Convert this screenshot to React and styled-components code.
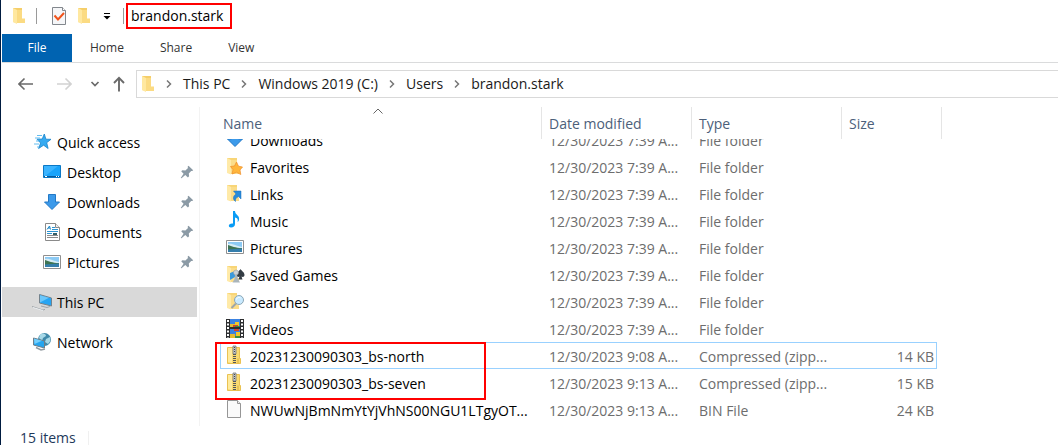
import React from "react";
import styled, { createGlobalStyle, css } from "styled-components";

const GlobalStyle = createGlobalStyle`
  *, *::before, *::after { box-sizing: border-box; }
  body {
    margin: 0;
    background: #fff;
    color: #000;
    font: 14px/20px "Open Sans", "Noto Sans", sans-serif;
  }
  button { font: inherit; color: inherit; border: 0; padding: 0; background: none; }
  a { color: inherit; text-decoration: none; }
  ul, ol { list-style: none; margin: 0; padding: 0; }
  svg { display: block; flex: none; }
`;

/* ---------- window frame ---------- */

const Window = styled.div`
  min-height: 100vh;
  display: flex;
  flex-direction: column;
  padding-left: 1px;
  border-left: 1px solid #001b40;
  overflow: hidden;
`;

const TitleBar = styled.header`
  display: flex;
  align-items: center;
  height: 34px;
  padding: 0 0 2px 10px;
`;

const ToolButton = styled.button`
  display: grid;
  place-items: center;
  width: ${(p) => p.$width}px;
  height: 24px;
`;

const Separator = styled.span`
  width: 1px;
  height: 16px;
  margin: 0 ${(p) => p.$after}px 0 ${(p) => p.$before}px;
  background: #9a9a9a;
`;

const WindowTitle = styled.h1`
  margin: 0;
  padding: 0 7px 0 3px;
  border: 2px solid #f00;
  height: 26px;
  font-size: 14px;
  font-weight: 400;
  line-height: 22px;
`;

const Ribbon = styled.nav`
  display: flex;
  height: 29px;
  border-bottom: 1px solid #dadbdc;
  font-size: 12px;
`;

const RibbonTab = styled.button`
  height: 28px;
  padding: 0 18px;
  color: #333;
  ${(p) =>
    p.$primary &&
    css`
      width: 70px;
      background: #0063b1;
      color: #fff;
    `}
`;

const NavBar = styled.div`
  display: flex;
  align-items: center;
  padding: 7px 0 9px 10px;
`;

const NavButton = styled(ToolButton)`
  color: ${(p) => (p.disabled ? "#d2d2d2" : "#6a6a6a")};
`;

const AddressBar = styled.ol`
  flex: 1;
  display: flex;
  align-items: center;
  height: 28px;
  padding-left: 4px;
  border: 1px solid #d9d9d9;
  border-right: 0;
`;

const Crumb = styled.li`
  display: flex;
  align-items: center;
  color: #1a1a1a;
  svg { margin: 0 10px; }
`;

/* ---------- main area ---------- */

const Content = styled.div`
  flex: 1;
  display: flex;
`;

const Sidebar = styled.nav`
  flex: none;
  width: 198px;
  padding: 20px 2px 0 0;
  border-right: 1px solid #f3f3f3;
`;

const SideGroup = styled.ul`
  margin-bottom: 10px;
`;

const SideLink = styled.a`
  display: flex;
  align-items: center;
  gap: 5px;
  height: 30px;
  padding: 0 3px 0 ${(p) => (p.$nested ? 40 : 30)}px;
  background: ${(p) => (p.$current ? "#d9d9d9" : "transparent")};
  span { flex: 1; line-height: 20px; padding-top: 2px; }
`;

const FilePane = styled.main`
  flex: 1;
  min-width: 0;
  overflow: hidden;
`;

const FileTable = styled.table`
  display: block;
`;

const TableHead = styled.thead`
  display: block;
  padding-left: 20px;
`;

const HeadRow = styled.tr`
  display: grid;
  grid-template-columns: 322px 150px 150px 100px;
  height: 32px;
`;

const HeadCell = styled.th`
  position: relative;
  padding: 7px 0 0 ${(p) => (p.$first ? 3 : 7)}px;
  border-right: 1px solid #e5e5e5;
  color: #4c607a;
  font-weight: 400;
  text-align: left;
`;

const SortMark = styled.svg`
  position: absolute;
  top: 1px;
  left: 50%;
  margin-left: -8px;
`;

/* The list is scrolled part of a row below the column headings. */
const TableBody = styled.tbody`
  display: block;
  overflow: hidden;
  padding: 0 0 3px 20px;
  tr:first-child { margin-top: -13px; }
`;

const FileRow = styled.tr`
  position: relative;
  display: grid;
  grid-template-columns: 321px 150px 150px 96px;
  width: 717px;
  height: 27px;
  line-height: 27px;
  border: 1px solid ${(p) => (p.$focused ? "#99d1ff" : "transparent")};
`;

const Cell = styled.td`
  height: 25px;
  padding: 0 4px 0 7px;
  color: #6d6d6d;
  white-space: nowrap;
  text-align: ${(p) => (p.$right ? "right" : "left")};
`;

const NameCell = styled(Cell)`
  display: grid;
  grid-template-columns: 20px 1fr;
  gap: 5px;
  padding: 0 0 0 4px;
  color: #000;
  svg { margin-top: 2px; }
`;

const Callout = styled.span`
  position: absolute;
  z-index: 1;
  top: -1px;
  left: -6px;
  width: 271px;
  height: 58px;
  border: 2px solid #f00;
  pointer-events: none;
`;

const StatusBar = styled.footer`
  display: flex;
  padding: 5px 0 0 18px;
  line-height: 14px;
  color: #1e395b;
  span {
    padding-right: 12px;
    border-right: 1px solid #f0f0f0;
  }
`;

/* ---------- icons ---------- */

const Svg = ({ w = 20, h = 20, children, ...rest }) => (
  <svg width={w} height={h} viewBox={`0 0 ${w} ${h}`} fill="none" aria-hidden="true" {...rest}>
    {children}
  </svg>
);

const FolderShape = () => (
  <>
    <path d="M2 2h10v12l2 1v3H5L2 16z" fill="#f8d577" />
    <path d="M2 2l4 2v14.500L2 17z" fill="#ffeaa8" />
    <path d="M6 4h6v9.500l2 1V18H6z" fill="#fbdd8a" />
  </>
);

const SmallFolder = () => (
  <Svg w={14} h={18}>
    <path d="M1 1h9v11h3v4H5L1 15z" fill="#f5ce69" />
    <path d="M1 1l4 2v14l-4-2z" fill="#ffe8a0" />
    <path d="M5 3h5v8.500h3V16H5z" fill="#fbdb83" />
  </Svg>
);

const CheckDoc = () => (
  <Svg w={16} h={18}>
    <path d="M1.500.5h10l3 3v14h-13z" fill="#f5f6f8" stroke="#82878d" />
    <path d="M11.500.5v3h3" stroke="#82878d" fill="#fff" />
    <path d="M3.500 8.500l3.500 4 6-6.500" stroke="#f0531c" strokeWidth="2" />
  </Svg>
);

const MenuArrow = () => (
  <Svg w={8} h={8}>
    <path d="M1 1.500h6" stroke="#000" />
    <path d="M.5 4h7L4 7.500z" fill="#000" />
  </Svg>
);

const ArrowIcon = ({ flip }) => (
  <Svg w={16} h={14}>
    <path d={flip ? "M1 7h14M9.500 1.500L15 7l-5.500 5.500" : "M15 7H1M6.500 1.500L1 7l5.500 5.500"} stroke="currentColor" strokeWidth="1.600" />
  </Svg>
);

const UpIcon = () => (
  <Svg w={12} h={16}>
    <path d="M6 15.500V2M1 7l5-5.200L11 7" stroke="currentColor" strokeWidth="1.900" />
  </Svg>
);

const DownChevron = () => (
  <Svg w={10} h={8}>
    <path d="M1.500 2L5 5.500 8.500 2" stroke="currentColor" strokeWidth="1.700" />
  </Svg>
);

const CrumbChevron = () => (
  <Svg w={8} h={10}>
    <path d="M2 1.500L5.500 5 2 8.500" stroke="#777" strokeWidth="1.500" />
  </Svg>
);

const PinIcon = () => (
  <Svg w={14} h={14}>
    <path d="M8.500.8l4.700 4.400-1 .9-1-.2-2.400 2.500.3 2.900-1.200 1.200-2.600-2.600L1.500 13.300l-.8-.2 2.900-4.400L1.200 6.300l1.200-1.100 3 .2L8 3l-.4-1.200z" fill="#8b9aa5" />
  </Svg>
);

const QuickIcon = () => (
  <Svg>
    <path d="M12.300 2l1.600 5.200 5.100.1-4.300 3.400 1.400 5.800-4.500-3.300-5 3.300 2-5.500-3.600-3.800 5.200-.2z" fill="#35aaf1" stroke="#1683ca" strokeWidth=".8" />
    <path d="M5 3.500h5M3 6h5M4 9h3M2 12h5M5 15h2" stroke="#63bdf0" />
  </Svg>
);

const DesktopIcon = () => (
  <Svg>
    <path d="M1.500 3.500h17v12h-17z" fill="#18a3fa" stroke="#0b78c5" />
    <path d="M2 15L16 4H2z" fill="#3bb4ff" />
    <path d="M2 14.500h16" stroke="#07599a" />
    <path d="M3 14.500h2M14 14.500h1M16 14.500h1" stroke="#fff" />
  </Svg>
);

const DownloadIcon = () => (
  <Svg>
    <path d="M6.500 2.500h7V10h4L10 17.500 2.500 10h4z" fill="#3c9aea" stroke="#2379c6" />
  </Svg>
);

const DocumentIcon = () => (
  <Svg>
    <path d="M3.500 1.500h10l4 4v13h-14z" fill="#fff" stroke="#8a8a8a" />
    <path d="M13.500 1.500v4h4" fill="#eee" stroke="#8a8a8a" />
    <path d="M5 7.500L7.500 4l1 3.500M6 6h2" stroke="#1b86c7" />
    <path d="M10 5.500h3M10 7.500h6M5 9.500h11M5 11.500h5" stroke="#2b93d1" />
    <path d="M5 13.500h11M5 15.500h11" stroke="#8b8b8b" />
    <path d="M11 11h4v2h-4z" fill="#315f68" />
  </Svg>
);

const PictureIcon = () => (
  <Svg>
    <path d="M1.500 3.500h17v13h-17z" fill="#fff" stroke="#8f8f8f" />
    <path d="M3 5h14v10H3z" fill="#8ccaf4" />
    <path d="M3 7c5-1 7 2 14 3v3H3z" fill="#d7edf5" />
    <path d="M3 8c4 1 7 3 14 3v2H3z" fill="#3e7453" />
    <path d="M3 12.500l14-1V15H3z" fill="#357eac" />
  </Svg>
);

const PcIcon = () => (
  <Svg>
    <path d="M7.500 2.500l12 3.500v8l-12-3z" fill="#27a5f3" stroke="#74828c" />
    <path d="M8 3.200L17 5.800 8 10.500z" fill="#6bc7fb" />
    <path d="M9 14l6 1.500 3-1M0 14.500l11 3.500 2-.6" stroke="#8f979d" strokeWidth=".8" />
    <path d="M1 15.500l10 3" stroke="#e9edf0" />
  </Svg>
);

const NetworkIcon = () => (
  <Svg>
    <circle cx="12.500" cy="7.500" r="6.500" fill="#3f89a9" />
    <path d="M8 3c3-3 6-1 6 1l-3 2-1 3-3-3zM14 7l4-2c1 3 0 5-2 7l-3-2z" fill="#a6d8e7" />
    <path d="M1.500 6l11 3v7l-11-3z" fill="#25a5ef" stroke="#6f7e88" />
    <path d="M2 6.600l8 2.200L2.500 12z" fill="#74cffc" />
    <path d="M4 15.500l5 2.500 4-1" stroke="#929ba1" strokeWidth="1.500" />
  </Svg>
);

const FavoritesIcon = () => (
  <Svg>
    <FolderShape />
    <path d="M11.500 6l2 4.200 4 .8-2.500 3 .8 4.500-4.300-2.200L7 18l1-4.300L5.500 10.500l4-.5z" fill="#ffb63b" stroke="#ee8d29" strokeWidth=".7" />
  </Svg>
);

const LinksIcon = () => (
  <Svg>
    <FolderShape />
    <path d="M8.500 8H16v8l-2.500-2.500C11 15 10 16 10.500 18.500 7 16 8.500 12.500 11 11z" fill="#278bda" stroke="#1c6eb8" strokeWidth=".5" />
  </Svg>
);

const MusicIcon = () => (
  <Svg>
    <path d="M8 1h2c0 4 5 4 4 9-.4 1-1 2-1.500 2 1-3-.5-4-2.500-4.500V14c0 2-1.500 3.500-4 3.500-3 0-3-4 1-4H8z" fill="#0a9cf5" />
  </Svg>
);

const GamesIcon = () => (
  <Svg>
    <FolderShape />
    <path d="M5 9l5-2v6l-5 3z" fill="#3a99dc" />
    <path d="M15.500 5c1 2 4 3 4 6 0 2-2 2.500-3 1.500l1 3h-4l1-3c-1 1-3 .5-3-1.500 0-3 3-4 4-6z" fill="#333c44" />
    <circle cx="11" cy="8.500" r="2.500" fill="#c9d1d6" stroke="#8c979d" strokeWidth=".5" />
    <path d="M10 11h2l1 4 2 3.500H7.500L9.500 15z" fill="#aab5bb" />
  </Svg>
);

const SearchesIcon = () => (
  <Svg>
    <FolderShape />
    <path d="M11 12.500L6.500 17" stroke="#9da6aa" strokeWidth="2" />
    <circle cx="14" cy="9" r="4.500" fill="#c9eaff" stroke="#8ca7b6" />
    <path d="M11.500 8.500c1-3 3-2 4-1.500" stroke="#fff" />
  </Svg>
);

const VideoIcon = () => (
  <Svg>
    <path d="M1 1h18v19H1z" fill="#2d2e30" />
    <path d="M5 1h10v8H5zM5 11h10v9H5z" fill="#3b82e1" />
    <path d="M5 6h5v3H5zM5 16h5v4H5z" fill="#e4bb33" />
    <path d="M10 4h4v4h-4zM11 14h4v4h-4z" fill="#f1c72c" />
    <path d="M8 7h5v2H8zM9 11h5v2H9z" fill="#d5432c" />
    <path d="M10 8h5v1h-5zM10 18h5v2h-5z" fill="#3b8d3f" />
    <path d="M3 2v18M17 2v18" stroke="#fff" strokeWidth="2" strokeDasharray="2 1.500" />
  </Svg>
);

const ZipIcon = () => (
  <Svg>
    <path d="M2.500 2.500h12v11h1v5h-13z" fill="#fada70" stroke="#eac253" />
    <path d="M3 3h4v15l-4-1z" fill="#ffeb9d" />
    <path d="M13 13.500v5" stroke="#d9ae40" />
    <path d="M8 1h3v8H8z" fill="#c7c9ca" stroke="#77797b" strokeWidth=".8" />
    <path d="M9.500 2v5" stroke="#46484a" strokeDasharray="1 1" />
    <path d="M9.500 9v10" stroke="#55585a" strokeWidth="3" strokeDasharray="1 1" />
  </Svg>
);

const BlankFileIcon = () => (
  <Svg>
    <path d="M2.500 1.500h10l3 3v14h-13z" fill="#fafafa" stroke="#969696" />
    <path d="M12.500 1.500v3h3" stroke="#969696" fill="#eee" />
  </Svg>
);

/* ---------- data ---------- */

const pinned = [
  { name: "Desktop", Icon: DesktopIcon },
  { name: "Downloads", Icon: DownloadIcon },
  { name: "Documents", Icon: DocumentIcon },
  { name: "Pictures", Icon: PictureIcon },
];

const folder = (name, Icon) => ({ name, Icon, date: "12/30/2023 7:39 A...", type: "File folder", size: "" });

const files = [
  folder("Downloads", DownloadIcon),
  folder("Favorites", FavoritesIcon),
  folder("Links", LinksIcon),
  folder("Music", MusicIcon),
  folder("Pictures", PictureIcon),
  folder("Saved Games", GamesIcon),
  folder("Searches", SearchesIcon),
  folder("Videos", VideoIcon),
  { name: "20231230090303_bs-north", Icon: ZipIcon, date: "12/30/2023 9:08 A...", type: "Compressed (zipp...", size: "14 KB", focused: true },
  { name: "20231230090303_bs-seven", Icon: ZipIcon, date: "12/30/2023 9:13 A...", type: "Compressed (zipp...", size: "15 KB" },
  { name: "NWUwNjBmNmYtYjVhNS00NGU1LTgyOT...", Icon: BlankFileIcon, date: "12/30/2023 9:13 A...", type: "BIN File", size: "24 KB" },
];

const path = ["This PC", "Windows 2019 (C:)", "Users", "brandon.stark"];

export default function App() {
  return (
    <>
      <GlobalStyle />
      <Window>
        <TitleBar>
          <ToolButton $width={14} aria-label="Folder menu"><SmallFolder /></ToolButton>
          <Separator $before={10} $after={12} />
          <ToolButton $width={20} aria-label="Properties"><CheckDoc /></ToolButton>
          <ToolButton $width={30} aria-label="New folder"><SmallFolder /></ToolButton>
          <ToolButton $width={16} aria-label="Customize toolbar"><MenuArrow /></ToolButton>
          <Separator $before={8} $after={2} />
          <WindowTitle>brandon.stark</WindowTitle>
        </TitleBar>

        <Ribbon aria-label="Ribbon">
          <RibbonTab $primary>File</RibbonTab>
          <RibbonTab>Home</RibbonTab>
          <RibbonTab>Share</RibbonTab>
          <RibbonTab>View</RibbonTab>
        </Ribbon>

        <NavBar>
          <NavButton $width={28} aria-label="Back"><ArrowIcon /></NavButton>
          <NavButton $width={48} aria-label="Forward" disabled><ArrowIcon flip /></NavButton>
          <NavButton $width={14} aria-label="Recent locations"><DownChevron /></NavButton>
          <NavButton $width={34} aria-label="Up"><UpIcon /></NavButton>
          <AddressBar aria-label="Address">
            <SmallFolder />
            {path.map((part) => (
              <Crumb key={part}>
                <CrumbChevron />
                <a href="#path">{part}</a>
              </Crumb>
            ))}
          </AddressBar>
        </NavBar>

        <Content>
          <Sidebar aria-label="Locations">
            <SideGroup>
              <li><SideLink href="#quick"><QuickIcon /><span>Quick access</span></SideLink></li>
              {pinned.map(({ name, Icon }) => (
                <li key={name}>
                  <SideLink href={`#${name}`} $nested>
                    <Icon /><span>{name}</span><PinIcon />
                  </SideLink>
                </li>
              ))}
            </SideGroup>
            <SideGroup>
              <li><SideLink href="#pc" $current><PcIcon /><span>This PC</span></SideLink></li>
            </SideGroup>
            <SideGroup>
              <li><SideLink href="#network"><NetworkIcon /><span>Network</span></SideLink></li>
            </SideGroup>
          </Sidebar>

          <FilePane>
            <FileTable>
              <TableHead>
                <HeadRow>
                  <HeadCell $first>
                    Name
                    <SortMark width="10" height="6" viewBox="0 0 10 6" fill="none" aria-hidden="true">
                      <path d="M.5 5.500L5 1l4.500 4.500" stroke="#666" />
                    </SortMark>
                  </HeadCell>
                  <HeadCell>Date modified</HeadCell>
                  <HeadCell>Type</HeadCell>
                  <HeadCell>Size</HeadCell>
                </HeadRow>
              </TableHead>
              <TableBody>
                {files.map(({ name, Icon, date, type, size, focused }) => (
                  <FileRow key={name} $focused={focused}>
                    <NameCell>
                      <Icon />
                      {name}
                      {focused && <Callout />}
                    </NameCell>
                    <Cell>{date}</Cell>
                    <Cell>{type}</Cell>
                    <Cell $right>{size}</Cell>
                  </FileRow>
                ))}
              </TableBody>
            </FileTable>
          </FilePane>
        </Content>

        <StatusBar><span>15 items</span></StatusBar>
      </Window>
    </>
  );
}
